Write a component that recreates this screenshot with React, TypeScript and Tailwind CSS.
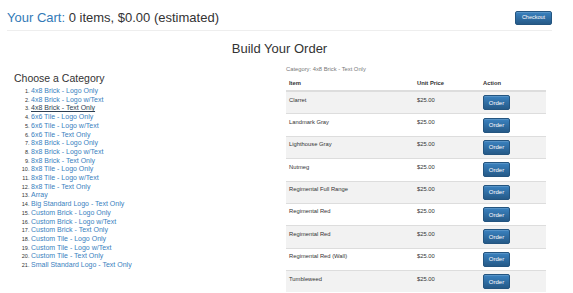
import React from 'react';

const categories = [
  '4x8 Brick - Logo Only',
  '4x8 Brick - Logo w/Text',
  '4x8 Brick - Text Only',
  '6x6 Tile - Logo Only',
  '6x6 Tile - Logo w/Text',
  '6x6 Tile - Text Only',
  '8x8 Brick - Logo Only',
  '8x8 Brick - Logo w/Text',
  '8x8 Brick - Text Only',
  '8x8 Tile - Logo Only',
  '8x8 Tile - Logo w/Text',
  '8x8 Tile - Text Only',
  'Array',
  'Big Standard Logo - Text Only',
  'Custom Brick - Logo Only',
  'Custom Brick - Logo w/Text',
  'Custom Brick - Text Only',
  'Custom Tile - Logo Only',
  'Custom Tile - Logo w/Text',
  'Custom Tile - Text Only',
  'Small Standard Logo - Text Only',
];

const items = [
  'Clarret',
  'Landmark Gray',
  'Lighthouse Gray',
  'Nutmeg',
  'Regimental Full Range',
  'Regimental Red',
  'Regimental Red',
  'Regimental Red (Wall)',
  'Tumbleweed',
];

const btn =
  'bg-gradient-to-b from-[#3a82c0] to-[#265a88] border border-[#245580] text-white rounded-[2px] shadow-[inset_0_1px_0_rgba(255,255,255,0.15)]';

const App: React.FC = () => {
  return (
    <div className="w-[573px] h-[293px] overflow-hidden bg-white text-[#333] font-['Liberation_Sans',Arial,sans-serif]">
      <div className="ml-[7px] w-[545px]">
        {/* cart header */}
        <div className="flex items-center justify-between pt-[10px] pb-[4px] border-b border-[#eee]">
          <div className="text-[13px] leading-[16px]">
            <span className="text-[#337ab7]">Your Cart:</span> 0 items, $0.00 (estimated)
          </div>
          <button className={`${btn} w-[37px] h-[14px] text-[5.5px] leading-none`}>Checkout</button>
        </div>

        <h1 className="mt-[10px] text-center text-[13px] leading-[16px]">Build Your Order</h1>

        <div className="mt-[7px] flex">
          {/* categories */}
          <div className="w-[272.5px] pl-[7px] pt-[8px]">
            <h2 className="text-[10.5px] leading-[12px]">Choose a Category</h2>
            <ol className="mt-[3px] pl-[17px] list-decimal text-[7px] leading-[8.7px] marker:text-[5.5px] marker:text-[#333]">
              {categories.map((c, i) => (
                <li key={c}>
                  <a
                    href="#"
                    className={i === 2 ? 'text-[#2e3f52] underline' : 'text-[#3a7fc0]'}
                  >
                    {c}
                  </a>
                </li>
              ))}
            </ol>
          </div>

          {/* items table */}
          <div className="w-[272.5px] px-[6.5px] pt-[1.5px]">
            <p className="text-[5.8px] leading-[7px] text-[#777] mb-[4.5px]">Category: 4x8 Brick - Text Only</p>
            <table className="w-[260px] border-collapse text-[5.8px] leading-[6px] table-fixed">
              <colgroup>
                <col className="w-[128px]" />
                <col className="w-[66px]" />
                <col className="w-[66px]" />
              </colgroup>
              <thead>
                <tr className="border-b-2 border-[#ddd]">
                  <th className="text-left font-bold pl-[3px] pt-[3px] pb-[3px] leading-[7px]">Item</th>
                  <th className="text-left font-bold pl-[3px] pt-[3px] pb-[3px] leading-[7px]">Unit Price</th>
                  <th className="text-left font-bold pl-[3px] pt-[3px] pb-[3px] leading-[7px]">Action</th>
                </tr>
              </thead>
              <tbody>
                {items.map((name, i) => (
                  <tr
                    key={name + i}
                    className={`border-t border-[#ddd] ${i % 2 === 0 ? 'bg-[#f2f2f2]' : 'bg-white'}`}
                  >
                    <td className="align-top pl-[3px] pt-[4.5px]">{name}</td>
                    <td className="align-top pl-[3px] pt-[4.5px]">$25.00</td>
                    <td className="align-top pl-[3px] pt-[3.2px] pb-[3.2px]">
                      <button className={`${btn} w-[27px] h-[15px] text-[6px] leading-none block`}>Order</button>
                    </td>
                  </tr>
                ))}
              </tbody>
            </table>
          </div>
        </div>
      </div>
    </div>
  );
};

export default App;
